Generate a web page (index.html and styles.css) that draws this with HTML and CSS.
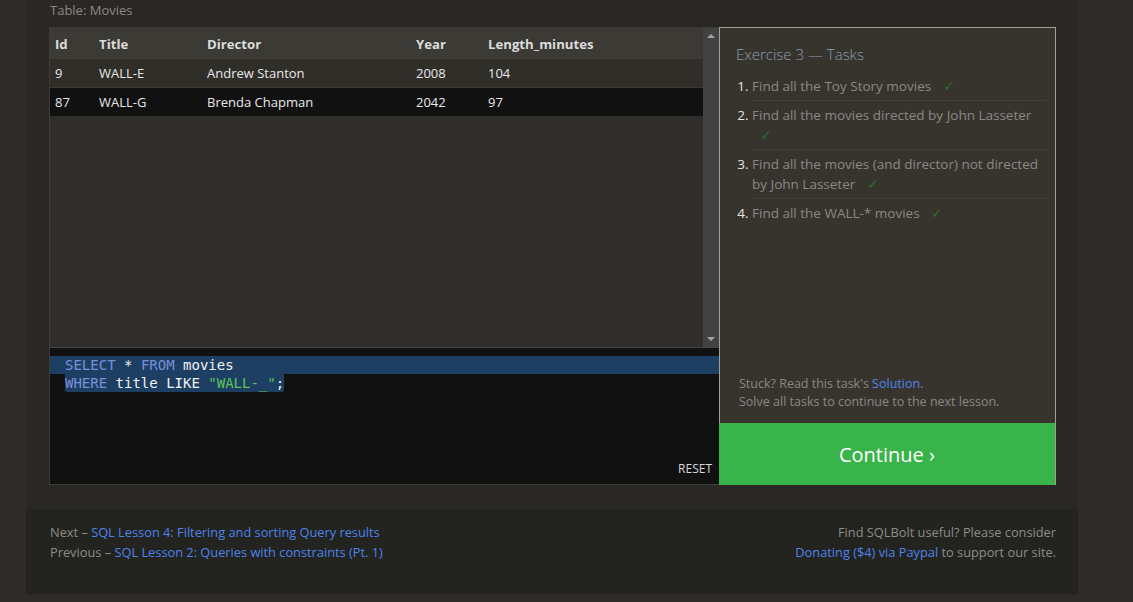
FILE: index.html
```html
<!DOCTYPE html>
<html lang="en">
<head>
<meta charset="utf-8">
<title>SQLBolt - Lesson 3</title>
<link rel="stylesheet" href="styles.css">
</head>
<body>
<div class="page">
  <div class="workspace">
    <div class="table-label">Table: Movies</div>
    <div class="exercise">
      <div class="left">
        <div class="results">
          <div class="table-wrap">
            <table class="movies">
              <colgroup>
                <col class="c-id"><col class="c-title"><col class="c-dir"><col class="c-year"><col>
              </colgroup>
              <thead>
                <tr><th>Id</th><th>Title</th><th>Director</th><th>Year</th><th>Length_minutes</th></tr>
              </thead>
              <tbody>
                <tr class="odd"><td>9</td><td>WALL-E</td><td>Andrew Stanton</td><td>2008</td><td>104</td></tr>
                <tr class="even"><td>87</td><td>WALL-G</td><td>Brenda Chapman</td><td>2042</td><td>97</td></tr>
              </tbody>
            </table>
          </div>
          <div class="scrollbar">
            <span class="arrow up"></span>
            <span class="arrow down"></span>
          </div>
        </div>
        <div class="editor">
          <div class="code">
            <div class="line sel-full"><span class="kw">SELECT</span> * <span class="kw">FROM</span> movies</div>
            <div class="line"><span class="sel"><span class="kw">WHERE</span> title LIKE <span class="str">"WALL-_"</span>;</span></div>
          </div>
          <div class="reset">RESET</div>
        </div>
      </div>
      <div class="tasks">
        <div class="tasks-title">Exercise 3 — Tasks</div>
        <ol class="task-list">
          <li>Find all the Toy Story movies <span class="check">✓</span></li>
          <li>Find all the movies directed by John Lasseter <span class="check">✓</span></li>
          <li>Find all the movies (and director) not directed by John Lasseter <span class="check">✓</span></li>
          <li>Find all the WALL-* movies <span class="check">✓</span></li>
        </ol>
        <div class="hint">
          <div>Stuck? Read this task's <a class="link" href="#">Solution</a>.</div>
          <div>Solve all tasks to continue to the next lesson.</div>
        </div>
        <a class="continue" href="#">Continue ›</a>
      </div>
    </div>
  </div>
  <div class="footer">
    <div class="nav">
      <div>Next – <a class="link" href="#">SQL Lesson 4: Filtering and sorting Query results</a></div>
      <div>Previous – <a class="link" href="#">SQL Lesson 2: Queries with constraints (Pt. 1)</a></div>
    </div>
    <div class="donate">
      <div>Find SQLBolt useful? Please consider</div>
      <div><a class="link" href="#">Donating ($4) via Paypal</a> to support our site.</div>
    </div>
  </div>
</div>
</body>
</html>
```

FILE: styles.css
```css
html, body {
  margin: 0;
  padding: 0;
  background: #2e2b29;
  font-family: "Open Sans", "Liberation Sans", sans-serif;
  font-size: 13px;
  overflow: hidden;
}

.page {
  width: 1052px;
  margin-left: 26px;
  background: #2a2824;
}

.workspace {
  padding: 0 22px 0 23px;
}

.table-label {
  color: #8a8885;
  line-height: 20px;
  height: 27px;
  padding-left: 1px;
}

.exercise {
  display: flex;
  height: 458px;
}

.left {
  width: 670px;
  display: flex;
  flex-direction: column;
}

.results {
  height: 319px;
  display: flex;
  border-top: 1px solid #3b3a35;
  border-left: 1px solid #3e3c37;
  background: #302e2a;
}

.table-wrap {
  flex: 1;
}

.movies {
  width: 100%;
  border-collapse: collapse;
  table-layout: fixed;
}

.c-id { width: 44px; }
.c-title { width: 108px; }
.c-dir { width: 209px; }
.c-year { width: 72px; }

.movies th {
  background: #3b3a35;
  color: #dcdcdc;
  font-weight: 700;
  font-size: 13.2px;
  text-align: left;
  height: 30px;
  padding: 2px 0 0 5px;
  box-sizing: border-box;
}

.movies td {
  color: #e8e8e8;
  height: 28px;
  padding: 0 0 0 5px;
  border-top: 1px solid #3d3b36;
}

.movies tr.odd td { background: #302e29; }
.movies tr.even td { background: #111111; }

.scrollbar {
  width: 16px;
  background: #424242;
  display: flex;
  flex-direction: column;
  justify-content: space-between;
  align-items: center;
  padding: 6px 0;
  box-sizing: border-box;
}

.arrow {
  width: 0;
  height: 0;
  border-left: 4px solid transparent;
  border-right: 4px solid transparent;
}
.arrow.up { border-bottom: 4px solid #a3a3a3; }
.arrow.down { border-top: 4px solid #a3a3a3; }

.editor {
  flex: 1;
  background: #111111;
  border-top: 1px solid #48464a;
  border-left: 1px solid #3e3c37;
  border-bottom: 1px solid #3e3c37;
  display: flex;
  flex-direction: column;
  padding: 8px 0 6px 0;
}

.code {
  font-family: "DejaVu Sans Mono", "Liberation Mono", monospace;
  font-size: 14px;
  color: #f2f2f2;
}

.line {
  line-height: 18px;
  padding-left: 15px;
  white-space: pre;
}

.sel-full { background: #1d3f63; }
.sel { display: inline-block; background: #1d3f63; border-radius: 0 0 2px 2px; }

.kw { color: #7a8fdc; }
.str { color: #5cc457; }

.reset {
  margin-top: auto;
  align-self: flex-end;
  color: #d8d8d8;
  font-size: 12px;
  line-height: 18px;
  padding-right: 7px;
}

.tasks {
  width: 337px;
  box-sizing: border-box;
  background: #37342e;
  border: 1px solid #a09f98;
  border-bottom: none;
  display: flex;
  flex-direction: column;
  padding: 16px 0 0 0;
}

.tasks-title {
  color: #8e9cb2;
  font-size: 15px;
  font-weight: 300;
  line-height: 20px;
  padding-left: 16px;
}

.task-list {
  margin: 8px 8px 0 0;
  padding: 0 0 0 32px;
  color: #8a8885;
  font-size: 13.5px;
}

.task-list li {
  line-height: 20px;
  padding: 4px 0 4px 0;
  border-bottom: 1px solid #423f39;
}

.task-list li:last-child { border-bottom: none; }

.task-list li::marker {
  color: #e3e3e3;
}

.check {
  display: inline-block;
  margin-left: 8px;
  color: #2d6d2d;
}

.hint {
  margin-top: auto;
  padding: 0 16px 12px 19px;
  color: #8a8885;
  font-size: 12.5px;
  line-height: 18px;
}

.link {
  color: #4d84ec;
  text-decoration: none;
}

.continue {
  display: block;
  height: 62px;
  line-height: 64px;
  background: #39b44a;
  color: #ffffff;
  text-align: center;
  font-size: 20px;
  text-decoration: none;
  margin-left: -1px;
}

.footer {
  margin-top: 24px;
  background: #232320;
  height: 85px;
  box-sizing: border-box;
  padding: 13px 22px 0 24px;
  display: flex;
  justify-content: space-between;
  color: #8e8c89;
  line-height: 20px;
  font-size: 12.8px;
}

.donate {
  text-align: right;
}
```
